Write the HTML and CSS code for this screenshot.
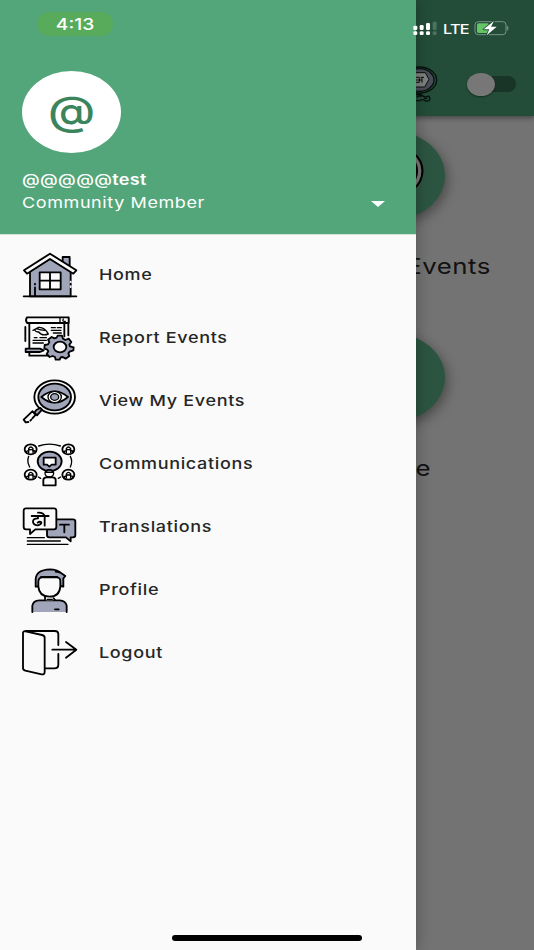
FILE: index.html
```
<!DOCTYPE html>
<html lang="en">
  <head>
    <meta charset="UTF-8" />
    <meta name="viewport" content="width=device-width, initial-scale=1.0" />
    <title>Community Events</title>
    <link rel="stylesheet" href="styles.css">
  </head>
  <body>
    <div class="page">
      <header class="topbar">
        <div class="status">
          <svg class="signal" width="24" height="14" viewBox="0 0 72 42">
            <g fill="#fff">
              <rect x="1" y="14" width="12" height="13" rx="4" /><rect x="1" y="31" width="12" height="11" rx="4" />
              <rect x="20" y="12" width="12" height="15" rx="4" /><rect x="20" y="31" width="12" height="11" rx="4" />
              <rect x="39" y="6" width="12" height="21" rx="4" /><rect x="39" y="31" width="12" height="11" rx="4" />
            </g>
            <g fill="#4c7261">
              <rect x="59" y="2" width="12" height="25" rx="4" /><rect x="59" y="31" width="12" height="11" rx="4" />
            </g>
          </svg>
          <span class="lte">LTE</span>
          <svg class="battery" width="35" height="16" viewBox="371 60 105 48">
            <rect x="374" y="65" width="93" height="39" rx="10" fill="none" stroke="#789486" stroke-width="3" />
            <path d="M471 78q5 6 0 13z" fill="#789486" stroke="#789486" stroke-width="2" />
            <rect x="380" y="70" width="36" height="29" rx="5" fill="#65c466" />
            <path d="M431 63L400 88h17l-8 18 30-26h-17z" fill="#fff" stroke="#234d39" stroke-width="5" stroke-linejoin="round" paint-order="stroke" />
          </svg>
        </div>
        <div class="tools">
          <svg class="badge" width="38" height="36" viewBox="150 200 114 108">
            <g stroke="#07100c" fill="none" stroke-width="4">
              <ellipse cx="208" cy="242" rx="52" ry="39" />
              <ellipse cx="208" cy="242" rx="44" ry="34" fill="#4b4e59" />
              <path d="M194 220h32l11 20-13 23h-30z" fill="#808080" stroke-width="3" />
              <path d="M198 234h10v15h-10M198 242h18M212 234h10M216 234v16" stroke-width="3" />
              <path d="M196 287q12-7 20 2 10 7 20 1 5 5 3 11-2 5-12 4-6-6-14-3-9 5-17 0" />
              <path d="M198 284l16 8M216 284l-16 10M222 297h10" />
            </g>
          </svg>
          <span class="switch"></span>
        </div>
      </header>
      <main class="tiles">
        <div class="tile">
          <div class="circle">
            <svg class="clock" width="64" height="54" viewBox="0 0 64 54">
              <ellipse cx="32" cy="27" rx="30.5" ry="25.5" fill="#173427" stroke="#000" stroke-width="2" />
              <ellipse cx="32" cy="27" rx="27.5" ry="23" fill="none" stroke="#777" stroke-width="3.5" />
              <ellipse cx="32" cy="27" rx="25" ry="21" fill="none" stroke="#000" stroke-width="2" />
            </svg>
          </div>
          <p><span>Report Events</span></p>
        </div>
        <div class="tile second">
          <div class="circle"></div>
          <p><span>Profile</span></p>
        </div>
      </main>
    </div>

    <aside class="drawer">
      <div class="account">
        <div class="time"><span>4:13</span></div>
        <div class="avatar"><span>@</span></div>
        <div class="name"><span>@@@@@<b>test</b></span></div>
        <div class="role">
          <span>Community Member</span>
          <i class="caret"></i>
        </div>
      </div>
      <nav class="menu">
        <a class="item">
          <svg viewBox="36 21 168 144">
            <path d="M158 62V39h21v38" class="tint" />
            <path d="M60 157V82l60-38 62 38v75z" class="tint" />
            <path d="M42 79l78-50 79 50-9 10-70-44-69 44z" class="plain" />
            <path d="M89 85h63v51H89zM120 85v51M89 110h63" class="plain" />
            <path d="M75 155v-25M41 157h158" />
            <path d="M75 117v6M182 113v16" stroke="#fafafa" />
            <path d="M75 118v4M182 119v3" />
          </svg>
          <span>Home</span>
        </a>
        <a class="item">
          <svg viewBox="36 24 168 144">
            <path d="M58 53v96h55M163 53v38M46 63v42M175 35v53" />
            <path d="M51 34h125v17H51q-6-8 0-17z" class="plain" />
            <path d="M150 36v14M160 39q-5 8 6 7" class="thin" />
            <path d="M69 73l17-9q18-1 29 20-19 7-29-6-8 1-12-6M80 68q11 5 25 5M124 65h12M142 65h12M124 73h29M130 81h24M69 103h40M90 95h19M73 95h8M69 111h31" class="thin" />
            <path d="M47 128h43l11 5-11 5H47z" class="tint" />
            <path d="M143 89h13l3 9 7 4 10-4 8 10-6 8 2 5 11 3-1 9-11 4-4 5 3 8-11 8-9-5-6 1-3 7h-12l-2-8-7-3-9 3-9-9 5-8-3-5-9-3 1-11 10-2 4-7-4-7 11-8 8 4 7-2z" class="tint" />
            <ellipse cx="150" cy="123" rx="19" ry="16" class="plain" />
          </svg>
          <span>Report Events</span>
        </a>
        <a class="item">
          <svg viewBox="36 21 168 144">
            <ellipse cx="134" cy="81" rx="61" ry="50" class="plain" />
            <ellipse cx="134" cy="81" rx="49" ry="40" class="tint" />
            <path d="M94 81q40-34 80 0-40 34-80 0z" class="plain" />
            <ellipse cx="134" cy="81" rx="20" ry="17" class="plain thin" />
            <ellipse cx="134" cy="81" rx="12" ry="10" class="tint thin" />
            <path d="M91 114l-12 6-7 10 9 6 15-17z" class="tint" />
            <path d="M67 124L41 149l6 8 8-1M67 124l11 9-11 12" />
            <path d="M64 149l-3 3" />
          </svg>
          <span>View My Events</span>
        </a>
        <a class="item">
          <svg viewBox="36 18 168 144">
            <path d="M86 36q32-11 65 0M56 67q-6 16 3 32M181 67q8 15 0 32M85 129l7 4M145 133l7-4" class="thin" />
            <ellipse cx="119" cy="82" rx="36" ry="29" class="tint" />
            <path d="M101 71h36v21h-12l-7 6-7-6h-10z" class="plain" />
            <ellipse cx="118" cy="118" rx="13" ry="11" class="plain thin" />
            <path d="M106 115q5-8 12-7 7-1 12 7z" class="tint thin" />
            <path d="M100 154v-16q0-8 10-8h18q9 0 9 8v16z" class="plain" />
            <g id="member" class="plain">
              <ellipse cx="62" cy="46" rx="18" ry="15" />
              <path d="M56 56V44q6-10 13 0v12M56 47h13M50 58v-6l7-3M75 57v-6l-7-2" class="thin" />
            </g>
            <use href="#member" x="113" />
            <use href="#member" y="76" />
            <use href="#member" x="113" y="76" />
          </svg>
          <span>Communications</span>
        </a>
        <a class="item">
          <svg viewBox="36 15 168 144">
            <path d="M117 64h72q7 0 7 7v40q0 7-7 7h-7v12l-14-12h-50q-7 0-7-7V71q0-7 6-7z" class="tint" />
            <path d="M48 31h84q7 0 7 7v48q0 8-7 8H76l-16 14V94H48q-7 0-7-8V38q0-7 7-7z" class="plain" />
            <path d="M65 54h51M104 54v29M84 54v7q-16 0-15 11 2 10 15 10 10-2 10-9-5-4-11 1M84 44q16-1 20 10" />
            <path d="M150 80h27M163 80v23" />
            <path d="M52 119h51M52 129h99M52 139h122" class="thin" />
          </svg>
          <span>Translations</span>
        </a>
        <a class="item">
          <svg viewBox="36 18 168 144">
            <path d="M67 156v-19q3-16 21-16h61q18 1 21 16v19" class="tint" />
            <path d="M104 108v11q15 5 29 0v-11z" class="plain" stroke="none" />
            <path d="M77 80V58q1-28 43-30 21 0 33 11l13 9-6 7v25l-10-2-8-27H93l-8 29z" class="tint" />
            <path d="M85 66q0-14 12-14h43q12 0 11 14v13q-2 31-33 31-31-1-33-31z" class="plain" />
            <path d="M105 109v9M112 119h14M131 115l4 5M135 148h11M137 35l12 2" />
          </svg>
          <span>Profile</span>
        </a>
        <a class="item">
          <svg viewBox="36 21 168 144">
            <path d="M39 33q0-6 8-5l49 11q8 2 8 8v103q0 8-9 7l-49-11q-7-2-7-7z" />
            <path d="M47 27h87q11 0 11 10v32M145 96v32q0 11-12 11h-28M127 83h70M168 60l31 23-31 24" />
          </svg>
          <span>Logout</span>
        </a>
      </nav>
      <div class="home-bar"></div>
    </aside>
  </body>
</html>
```
FILE: styles.css
```
* {
  box-sizing: border-box;
}
body {
  margin: 0;
  height: 950px;
  position: relative;
  overflow: hidden;
  background-color: #737373;
  color: #262626;
  font-family: Inter, "Liberation Sans", sans-serif;
}
p {
  margin: 0;
}
/* wide lettering */
.lte,
.tile span,
.account span,
.item span {
  display: inline-block;
  transform: scaleX(1.2);
  transform-origin: left center;
  white-space: nowrap;
}
.topbar {
  height: 116px;
  padding: 20px 18px 0 0;
  background-color: #234d39;
  box-shadow: 0 2px 5px rgba(0, 0, 0, 0.4);
  position: relative;
}
.status {
  display: flex;
  justify-content: flex-end;
  align-items: center;
  height: 16px;
  padding-right: 7px;
}
/* the phone's status icons stay above the drawer */
.signal {
  position: relative;
  z-index: 2;
}
.lte {
  width: 25px;
  margin: 1px 6px 0 6px;
  color: #fff;
  font-size: 13.5px;
  font-weight: 500;
  letter-spacing: -0.6px;
}
.tools {
  display: flex;
  justify-content: flex-end;
  align-items: center;
  margin-top: 30px;
}
.switch {
  display: flex;
  align-items: center;
  width: 46px;
  height: 16px;
  margin-left: 32px;
  border-radius: 9px;
  background-color: #193528;
}
.switch::before {
  content: "";
  width: 28px;
  height: 23px;
  margin-left: -3px;
  flex: none;
  border-radius: 50%;
  background-color: #777;
  box-shadow: 0 1px 2px rgba(0, 0, 0, 0.4);
}
.tiles {
  display: flex;
  flex-direction: column;
  padding: 15px 0 0 338px;
}
.tile {
  width: 107px;
  height: 202px;
}
.circle {
  display: flex;
  justify-content: center;
  width: 107px;
  height: 89px;
  padding-top: 13px;
  border-radius: 50%;
  background-color: #2c5541;
  box-shadow: 3px 4px 12px rgba(0, 0, 0, 0.35);
}
.tile p {
  display: flex;
  justify-content: flex-end;
  margin: 32px -46px 0 0;
  color: #111;
  font-size: 21.5px;
  line-height: 28px;
  letter-spacing: 0.4px;
}
.tile p span {
  transform-origin: right center;
}
.tile.second p {
  margin-right: 14px;
}
.drawer {
  position: absolute;
  top: 0;
  left: 0;
  z-index: 1;
  width: 416px;
  height: 950px;
  display: flex;
  flex-direction: column;
  background-color: #fafafa;
  box-shadow: 0 0 14px rgba(0, 0, 0, 0.3);
}
.account {
  height: 235px;
  padding: 12px 22px 0;
  color: #fff;
  background-color: #52a67a;
  border-bottom: 1px solid #cfe3d8;
}
.time {
  display: flex;
  justify-content: center;
  align-items: center;
  width: 76px;
  height: 24px;
  margin-left: 15px;
  border-radius: 12px;
  background-color: #57ab5a;
  font-size: 16px;
  font-weight: 500;
}
.account .time span,
.account .avatar span {
  transform-origin: center;
}
.avatar {
  display: flex;
  justify-content: center;
  align-items: center;
  width: 99px;
  height: 82px;
  margin-top: 35px;
  padding-bottom: 3px;
  border-radius: 50%;
  background-color: #fff;
  color: #3b845c;
  font-size: 40px;
  font-weight: 500;
}
.name {
  margin-top: 15px;
  font-size: 15px;
  font-weight: 500;
  line-height: 23px;
  letter-spacing: 0.3px;
}
.name b {
  font-weight: 600;
}
.role {
  display: flex;
  justify-content: space-between;
  align-items: center;
  font-size: 15px;
  line-height: 24px;
  letter-spacing: 0.5px;
}
.caret {
  margin: 1px 9px 0 0;
  border: 7px solid transparent;
  border-top: 6px solid #fff;
  border-bottom: 0;
}
.menu {
  flex: 1;
  padding: 8px 22px 0;
}
.item {
  display: flex;
  align-items: center;
  height: 63px;
  font-size: 15px;
  font-weight: 450;
  letter-spacing: 0.55px;
}
.item span {
  margin-top: -1px;
}
.item svg {
  width: 56px;
  height: 48px;
  margin-right: 21px;
  fill: none;
  stroke: #000;
  stroke-width: 5.5;
  stroke-linejoin: round;
  stroke-linecap: round;
}
.item .tint {
  fill: #a0a5ba;
}
.item .plain {
  fill: #fafafa;
}
.item .thin {
  stroke-width: 4;
}
.home-bar {
  width: 190px;
  height: 6px;
  margin: 0 0 9px 172px;
  border-radius: 3px;
  background-color: #000;
}
```
